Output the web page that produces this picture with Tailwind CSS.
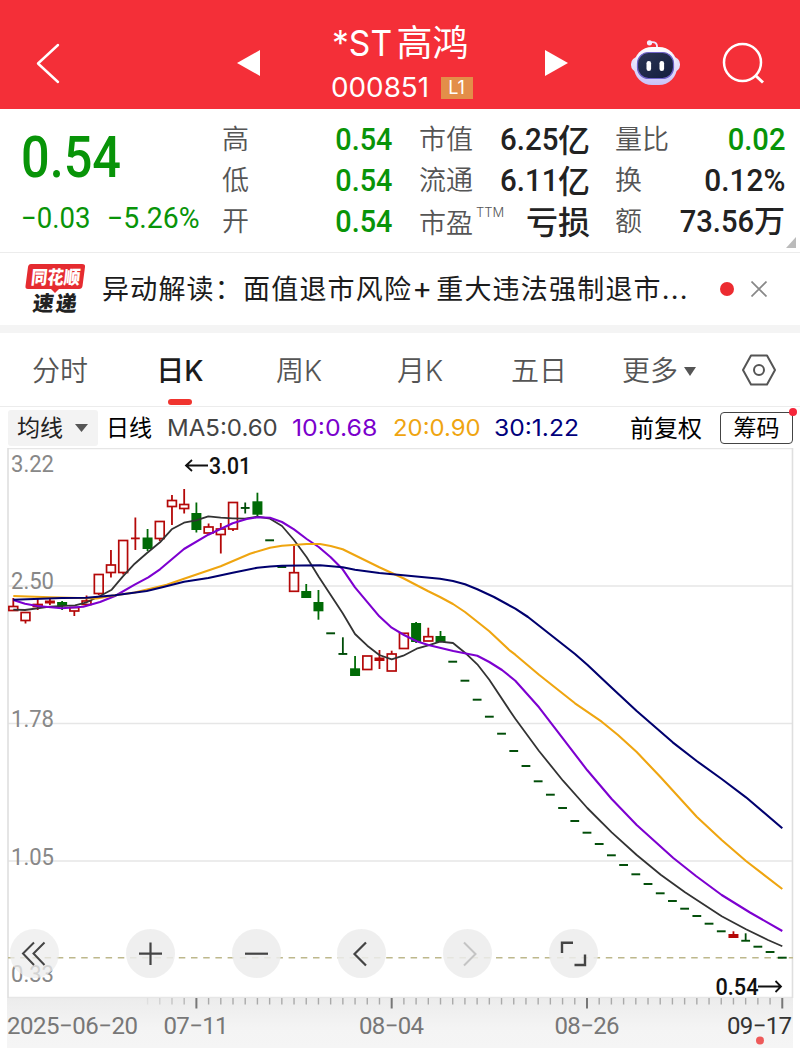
<!DOCTYPE html>
<html lang="zh-CN">
<head>
    <meta charset="UTF-8">
    <meta name="viewport" content="width=device-width, initial-scale=1.0">
    <title>*ST高鸿 000851</title>
    <script src="https://cdn.jsdelivr.net/npm/@tailwindcss/browser@4"></script>
    <style>
        body { font-family: Inter, 'Noto Sans CJK SC', sans-serif; }
        .din { font-family: Roboto, 'Noto Sans CJK SC', sans-serif; }
    </style>
</head>
<body class="w-[800px] h-[1048px] overflow-hidden bg-white text-[#222]">
    <header class="h-[109px] bg-[#f42f38] text-white flex">
        <div class="w-[230px] pt-[43px] pl-[36px]">
            <svg class="w-6 h-[42px]" viewBox="0 0 24 42" fill="none" stroke="#fff" stroke-width="2.4" stroke-linecap="round" stroke-linejoin="round"><path d="M22 2L2 20.500L22 39"/></svg>
        </div>
        <div class="w-[344px] flex justify-between">
            <svg class="w-6 h-[26px] mt-[50px] ml-[6px]" viewBox="0 0 24 26" fill="#fff"><path d="M24 0V26L1 13Z"/></svg>
            <div class="flex flex-col items-start pt-[21px] w-[142px]">
                <div class="flex h-[44px] items-center whitespace-nowrap">
                    <span class="w-[65px] text-[35px] leading-[44px]"><span class="inline-block origin-left scale-x-[0.96]">*ST</span></span>
                    <span class="text-[36px] leading-[44px]">高鸿</span>
                </div>
                <div class="flex h-[44px] items-center">
                    <span class="w-[109px] text-[27px]"><span class="inline-block origin-left scale-x-[1.03] -translate-x-px translate-y-px">000851</span></span>
                    <span class="w-8 h-[22px] bg-[#e38e49] text-[18px] leading-[22px] text-center translate-y-px">L1</span>
                </div>
            </div>
            <svg class="w-6 h-[26px] mt-[50px] mr-[5px]" viewBox="0 0 24 26" fill="#fff"><path d="M0 0V26L23 13Z"/></svg>
        </div>
        <svg class="w-[52px] h-12 ml-[55px] mt-[38px]" viewBox="0 0 52 48">
            <defs>
                <linearGradient id="head" x1="0" y1="0" x2="0" y2="1"><stop offset="0" stop-color="#fff"/><stop offset="1" stop-color="#c9c2f8"/></linearGradient>
                <linearGradient id="face" x1="0" y1="0" x2="1" y2="1"><stop offset="0" stop-color="#2c3655"/><stop offset="1" stop-color="#131d3d"/></linearGradient>
            </defs>
            <path d="M21 4.500C26 3.500 28.500 5 28 10" fill="none" stroke="#eee6ff" stroke-width="1.800"/>
            <circle cx="20.500" cy="4.800" r="2.600" fill="#f3edff"/>
            <rect x="2" y="19" width="49" height="15" rx="7" fill="#e4e0fc"/>
            <rect x="5" y="9" width="43" height="38" rx="18" fill="url(#head)"/>
            <rect x="8.500" y="14.500" width="36" height="26" rx="11" fill="url(#face)" stroke="#6f63c9" stroke-width="1.200"/>
            <rect x="17.500" y="23" width="4.600" height="10" rx="2.200" fill="#fff"/>
            <rect x="30.500" y="23" width="4.600" height="10" rx="2.200" fill="#fff"/>
        </svg>
        <svg class="w-11 h-11 ml-[41px] mt-[42px]" viewBox="0 0 44 44" fill="none" stroke="#fff" stroke-width="2.500"><circle cx="20.500" cy="20.500" r="18.500"/><path d="M33.500 33.500L41 40.500" stroke-width="3"/></svg>
    </header>

    <section class="h-[144px] border-b border-[#ececec] relative flex pt-[11px]">
        <div class="w-[222px] pl-[21px] text-[#089408] din whitespace-nowrap">
            <div class="text-[57px] leading-[76px] font-medium h-[76px]"><span class="inline-block origin-left scale-x-[0.885]">0.54</span></div>
            <div class="flex text-[29px] leading-[44px]">
                <span class="w-[86px]"><span class="inline-block origin-left scale-x-[0.95]">−0.03</span></span>
                <span class="inline-block origin-left scale-x-[0.98]">−5.26%</span>
            </div>
        </div>
        <div class="w-[170px] grid grid-rows-[41px_41px_41px] text-[#089408]">
            <div class="flex justify-between items-center"><span class="text-[27px] font-[350] text-[#555]">高</span><span class="din text-[31px] font-medium inline-block origin-right scale-x-[0.93]">0.54</span></div>
            <div class="flex justify-between items-center"><span class="text-[27px] font-[350] text-[#555]">低</span><span class="din text-[31px] font-medium inline-block origin-right scale-x-[0.93]">0.54</span></div>
            <div class="flex justify-between items-center"><span class="text-[27px] font-[350] text-[#555]">开</span><span class="din text-[31px] font-medium inline-block origin-right scale-x-[0.93]">0.54</span></div>
        </div>
        <div class="w-[171px] ml-[27px] grid grid-rows-[41px_41px_41px]">
            <div class="flex justify-between items-center"><span class="text-[27px] font-[350] text-[#555]">市值</span><span class="din text-[31px] font-medium flex items-center"><span class="origin-right scale-x-[0.95]">6.25</span><span class="text-[32px] leading-[36px]">亿</span></span></div>
            <div class="flex justify-between items-center"><span class="text-[27px] font-[350] text-[#555]">流通</span><span class="din text-[31px] font-medium flex items-center"><span class="origin-right scale-x-[0.95]">6.11</span><span class="text-[32px] leading-[36px]">亿</span></span></div>
            <div class="flex justify-between items-center"><span class="text-[27px] font-[350] text-[#555] relative top-[2px]">市盈<span class="absolute left-[57px] top-0 text-[13px] leading-4">TTM</span></span><span class="text-[32px] leading-[36px] font-medium">亏损</span></div>
        </div>
        <div class="w-[170px] ml-[25px] grid grid-rows-[41px_41px_41px]">
            <div class="flex justify-between items-center"><span class="text-[27px] font-[350] text-[#555]">量比</span><span class="din text-[31px] font-medium text-[#089408] inline-block origin-right scale-x-[0.94]">0.02</span></div>
            <div class="flex justify-between items-center"><span class="text-[27px] font-[350] text-[#555]">换</span><span class="din text-[31px] font-medium inline-block origin-right scale-x-[0.96]">0.12%</span></div>
            <div class="flex justify-between items-center"><span class="text-[27px] font-[350] text-[#555]">额</span><span class="din text-[31px] font-medium flex items-center"><span class="origin-right scale-x-[0.94]">73.56</span><span>万</span></span></div>
        </div>
        <svg class="absolute right-[4px] bottom-[4px] w-[10px] h-[11px]" viewBox="0 0 10 11" fill="#bbb"><path d="M10 0V11H0Z"/></svg>
    </section>

    <section class="h-[72px] flex items-center">
        <div class="ml-[25px] w-[77px] h-[52px]">
            <svg class="w-[62px] h-[52px]" viewBox="0 0 62 52">
                <path d="M6 1H57Q60.500 1 60 4L57.500 23Q57 26 54 26H34L30 30L26 26H3Q0 26 .5 23L3 4Q3.500 1 6 1Z" fill="#e52b30"/>
                <text transform="translate(5.500 20.500) skewX(-6)" font-size="18.500" font-weight="900" fill="#fff" textLength="49" lengthAdjust="spacingAndGlyphs" font-family="Noto Sans CJK SC">同花顺</text>
                <text transform="translate(7 47.500) skewX(-7)" font-size="21" font-weight="900" fill="#222" textLength="44" font-family="Noto Sans CJK SC">速递</text>
            </svg>
        </div>
        <div class="w-[618px] pt-[2px] text-[27px] tracking-[1.2px] whitespace-nowrap text-[#1c1c1c]">异动解读：面值退市风险<span class="inline-block w-[24px] text-[30px] leading-[30px]">+</span>重大违法强制退市...</div>
        <span class="size-[14px] rounded-full bg-[#ec2b30]"></span>
        <svg class="size-4 ml-[17px]" viewBox="0 0 16 16" stroke="#888" stroke-width="1.700" fill="none"><path d="M.5 .5L15.500 15.500M15.500 .5L.5 15.500"/></svg>
    </section>
    <div class="h-2 bg-[#f4f4f4]"></div>

    <nav class="h-[74px] pt-[3px] border-b border-[#ececec] grid grid-cols-[120px_120px_120px_120px_118px_122px_80px] text-[28px] font-[350] text-[#555] items-center text-center">
        <span>分时</span>
        <span class="relative font-medium text-[#1c1c1c]">日K<i class="absolute left-[48px] top-[49px] w-6 h-[6px] rounded-full bg-[#f0342e]"></i></span>
        <span class="-translate-x-px">周K</span>
        <span>月K</span>
        <span>五日</span>
        <span class="flex items-center justify-center">更多<svg class="w-3 h-[9px] ml-[6px]" viewBox="0 0 12 9" fill="#555"><path d="M0 0H12L6 9Z"/></svg></span>
        <svg class="w-[36px] h-8 ml-[21px] mb-[3px]" viewBox="0 0 36 32" fill="none" stroke="#555" stroke-width="2"><path d="M10 1.500H26L34 16L26 30.500H10L2 16Z" stroke-linejoin="round"/><circle cx="18" cy="16" r="5"/></svg>
    </nav>

    <div class="h-[41px] flex items-center pl-2 text-[23px] whitespace-nowrap">
        <div class="w-[90px] h-[36px] rounded-[3px] bg-[#f3f3f3] flex items-center justify-between pl-[9px] pr-[10px] pt-px text-[#222]">均线<svg class="w-[13px] h-2" viewBox="0 0 13 8" fill="#555"><path d="M0 0H13L6.500 8Z"/></svg></div>
        <span class="w-[69px] pl-[8px] pt-[2px] text-black">日线</span>
        <span class="w-[125px] pt-[2px] text-[#444]"><span class="inline-block origin-left scale-x-[1.045]">MA5:0.60</span></span>
        <span class="w-[101px] pt-[2px] text-[#7a00cc]"><span class="inline-block origin-left scale-x-[1.08]">10:0.68</span></span>
        <span class="w-[101px] pt-[2px] text-[#efa510]"><span class="inline-block origin-left scale-x-[1.04]">20:0.90</span></span>
        <span class="w-[136px] pt-[2px] text-[#00007c]"><span class="inline-block origin-left scale-x-[1.07]">30:1.22</span></span>
        <span class="w-[90px] pt-[2px] text-[24px] text-black">前复权</span>
        <span class="relative w-[73px] h-8 border border-[#444] rounded-[4px] text-[23px] leading-[31px] text-center text-black">筹码<i class="absolute -right-[5px] -top-[5px] size-2 rounded-full bg-[#f5263a]"></i></span>
    </div>

    <main class="relative h-[600px]">
        <svg class="block w-[800px] h-[600px]" viewBox="0 448 800 600" fill="none">
            <defs>
                <linearGradient id="axis" x1="0" y1="0" x2="0" y2="1"><stop offset="0" stop-color="#ececec"/><stop offset=".6" stop-color="#f4f4f4"/><stop offset="1" stop-color="#f5f5f5"/></linearGradient>
            </defs>
            <rect x="7" y="998" width="786" height="50" fill="url(#axis)"/>
            <path d="M8 448.500H792M8 586H792M8 723.500H792M8 861H792M8 997.500H792" stroke="#e6e6e6" stroke-width="1.300"/>
            <path d="M8 448V998M792.500 448V998" stroke="#dfdfdf" stroke-width="1.600"/>
            <path d="M8 957.700H793" stroke="#bdb88c" stroke-width="1.500" stroke-dasharray="6.500 5.700"/>
            <g id="candles"></g>
            <g stroke-width="2.100" stroke-linejoin="round">
                <polyline stroke="#333" stroke-width="1.800" points="13.3,609.7 25,610 50,606.7 75,605.3 86.7,602.3 100,596 111.7,589.7 122.7,576.7 134.7,563.7 146.7,553.3 160,542.3 171.7,529.3 184,522.7 196,520.3 208.3,516.3 220.7,517.7 232.7,518.3 245,518.7 257.3,516.7 270,518.7 282,526 294,540 306.7,557.3 318.7,576.7 330.7,595 342.7,613.3 355,634 367.3,645.7 379.3,655 391.7,659.3 403.3,655.7 416.7,648.7 428.3,645.3 440,641.7 453,643 465,652.7 477.3,664.3 489.3,679.7 510,711 515.3,718.7 539,751 563,780.7 587.3,808 611.7,832.3 636.7,855 660.7,874.7 685,892.3 721.7,916.3 746,929.3 768,940 782.3,946.3"/>
                <polyline stroke="#7d00d0" points="13.3,600 25,603.7 37.3,606 61.7,608.3 83.3,606.7 100,602 115,596 134.7,584.7 148.3,577.3 160,569.3 184,549 208.3,534.7 232.7,523.3 246.7,519 257.3,517.3 270,517.7 282,522 294,529.3 306.7,539 318.7,547 330.7,557.3 342.7,569.3 355,587.3 379.3,616.3 391.7,627.7 404,635 416.7,641.3 428.3,645 453.3,651 477.3,655.7 489.3,662 502,670 515.3,680.7 539,707.3 563,738.7 587.3,770.3 611.7,799 636.7,825 673.3,858 696,876 721.7,895 750,912.500 782.3,931"/>
                <polyline stroke="#efa510" points="13.3,596 50,597.3 96.7,598.5 115,595.3 134.7,592.500 166.7,584.7 184,578.7 220.7,566.3 250,553.7 270,547.7 282,545.7 306.7,544 320,544 330.7,546 342.7,549.3 379.3,567.3 403.3,578.3 428.3,591.3 440,597 453,604 465,612 489.3,631.3 510,650.7 515.3,654.7 539,674.7 575,703.3 601.7,721.7 618,735 636.7,752 660.7,777.3 696.7,816.7 721.7,840 746,861 782.3,889"/>
                <polyline stroke="#00006e" points="13.3,599.7 61.7,598 86.7,597.7 115,595.3 146.7,591 163.3,587 184,581.7 208.3,578 232.7,572.7 257.3,567.7 270,566.5 282,565.7 320,565.3 342.7,567.3 355,569.7 379.3,573 403.3,575.3 440,578.7 453,581 465,584.3 477.3,589.3 494,597 515.3,608.7 528,617 575,654 587.3,664.7 611.7,687.7 636.7,711 672.7,742.3 696.7,761 721.7,779 746,797.3 782.3,828.3"/>
            </g>
            <g font-family="Roboto" font-size="24" fill="#888">
                <text x="11" y="472" textLength="43" lengthAdjust="spacingAndGlyphs">3.22</text>
                <text x="11" y="589" textLength="43" lengthAdjust="spacingAndGlyphs">2.50</text>
                <text x="11" y="727" textLength="43" lengthAdjust="spacingAndGlyphs">1.78</text>
                <text x="11" y="864.500" textLength="43" lengthAdjust="spacingAndGlyphs">1.05</text>
                <text x="11" y="981.500" textLength="43" lengthAdjust="spacingAndGlyphs">0.33</text>
            </g>
            <g font-family="Roboto" font-size="24" font-weight="500" fill="#111">
                <text x="209" y="474" textLength="42" lengthAdjust="spacingAndGlyphs">3.01</text>
                <text x="715.500" y="995" textLength="43" lengthAdjust="spacingAndGlyphs">0.54</text>
            </g>
            <path d="M208 465.500H186M192 460L186 465.500L192 471M758 986.500H781M775.500 981L781 986.500L775.500 992" stroke="#111" stroke-width="1.800"/>
            <g id="ticks"></g>
            <g font-family="Roboto" font-size="24" fill="#777">
                <text x="7" y="1034" textLength="131" lengthAdjust="spacing">2025−06−20</text>
                <text x="163.500" y="1034" textLength="65" lengthAdjust="spacing">07−11</text>
                <text x="359" y="1034" textLength="65" lengthAdjust="spacing">08−04</text>
                <text x="554.500" y="1034" textLength="65" lengthAdjust="spacing">08−26</text>
                <text x="727" y="1034" textLength="65" lengthAdjust="spacing" fill="#333">09−17</text>
            </g>
            <circle cx="760" cy="1040.500" r="4" fill="#ee5a5a"/>
        </svg>

        <!-- chart controls -->
        <div class="absolute left-[10px] top-[481px] flex text-[#444]">
            <button class="size-[49px] mr-[67px] rounded-full bg-[#ececec]/75"><svg class="size-full" viewBox="0 0 49 49" fill="none" stroke="currentColor" stroke-width="2"><path d="M24 13.500L13 24.500L24 36M34.500 13.500L23.500 24.500L34.500 36"/></svg></button>
            <button class="size-[49px] mr-[57px] rounded-full bg-[#ececec]/85"><svg class="size-full" viewBox="0 0 49 49" fill="none" stroke="currentColor" stroke-width="2.200"><path d="M13 24.700H36M24.500 13.500V36"/></svg></button>
            <button class="size-[49px] mr-[56px] rounded-full bg-[#ececec]/85"><svg class="size-full" viewBox="0 0 49 49" fill="none" stroke="currentColor" stroke-width="2.200"><path d="M13 24.700H36"/></svg></button>
            <button class="size-[49px] mr-[57px] rounded-full bg-[#ececec]/85"><svg class="size-full" viewBox="0 0 49 49" fill="none" stroke="currentColor" stroke-width="2.200"><path d="M29 13.500L17.500 25L29 36.500"/></svg></button>
            <button class="size-[49px] mr-[57px] rounded-full bg-[#ececec]/85 text-[#c4c4c4]"><svg class="size-full" viewBox="0 0 49 49" fill="none" stroke="currentColor" stroke-width="2"><path d="M21 13.500L32.500 25L21 36.500"/></svg></button>
            <button class="size-[49px] rounded-full bg-[#ececec]/85"><svg class="size-full" viewBox="0 0 49 49" fill="none" stroke="currentColor" stroke-width="2.400"><path d="M13 24V13.700H24M25.500 36H36V25.500"/></svg></button>
        </div>
    </main>

    <script>
        // type, body top, body bottom, wick top, wick bottom
        // h = hollow red, r = solid red, g = solid green
        const candles = [
            ['h', 606.5, 610.5, 598, 611], ['h', 612.5, 620.5, 612, 623.5], ['h', 604.5, 606.5, 599, 610], ['r', 600.5, 603.5, 599, 605],
            ['g', 602, 606, 601, 610], ['h', 607.5, 611, 607, 616], ['h', 601, 604.5, 595.5, 606], ['h', 574.5, 593.5, 574, 595],
            ['h', 565, 572.5, 550, 577.5], ['h', 540.5, 572.5, 540, 574.5], ['r', 537.5, 539.3, 517.5, 550], ['g', 537.5, 549, 529, 551],
            ['h', 521.5, 538.5, 521, 541], ['h', 500.5, 506.5, 495, 525], ['h', 504.5, 508.5, 489, 513.5], ['g', 513, 530, 502.5, 532.5],
            ['h', 527, 533, 523.5, 533], ['h', 529, 534.5, 523, 553.5], ['h', 502.5, 529, 502, 531], ['g', 507, 508.9, 502.5, 513.5],
            ['g', 501.3, 514.7, 492.7, 516], 540.3, 567, ['h', 572.7, 591.3, 546, 592],
            ['g', 591, 598, 584, 598], ['g', 602, 611.3, 590, 619.7], 633.3, ['g', 653, 654.9, 637.3, 654.5],
            ['g', 668.3, 676, 656, 676], ['h', 656, 669.5, 656, 669.5], ['r', 657.5, 661, 650, 669], ['h', 654, 671, 650.7, 671],
            ['h', 633.3, 648.5, 633, 648.5], ['g', 623, 642, 622, 643], ['h', 636.7, 641, 627.7, 641], ['g', 636, 642, 631, 642],
            661.7, 680.7, 699.7, 716.7, 733.7, 751, 766, 781.3, 794.7, 808, 821, 832.7, 844, 855.3, 865, 874.3, 884, 893.3, 901, 908.7, 916, 923.7, 931.3,
            ['r', 934, 938, 931.3, 938], ['g', 939.8, 941.7, 933.3, 941], 946.7, 952, 957.7
        ];
        const RED = '#b40808', GREEN = '#006a06', DARK = '#004d08';
        let out = '';
        candles.forEach((c, i) => {
            const x = 13.3 + i * 12.206;
            // one-price days are only a dash
            if (typeof c === 'number') c = ['g', c - 0.98, c + 0.98];
            const [t, a, b, hi, lo] = c;
            const col = t === 'g' ? (b - a < 2 ? DARK : GREEN) : RED;
            if (hi) {
                if (t === 'h') {
                    out += `<path d="M${x} ${hi}V${a}M${x} ${b}V${lo}" stroke="${col}" stroke-width="1.8"/>`;
                } else {
                    out += `<path d="M${x} ${hi}V${lo}" stroke="${col}" stroke-width="1.8"/>`;
                }
            }
            if (t === 'h') {
                out += `<rect x="${x - 4.4}" y="${a}" width="8.8" height="${b - a}" stroke="${col}" stroke-width="1.7"/>`;
            } else {
                const w = b - a < 2 ? 8.8 : 10;
                out += `<rect x="${x - w / 2}" y="${a}" width="${w}" height="${b - a}" fill="${col}"/>`;
            }
        });
        document.getElementById('candles').innerHTML = out;

        let ticks = '';
        for (let i = 11; i < 64; i++) {
            const x = 13.3 + i * 12.206;
            const major = i % 16 === 15;
            const o = i < 15 ? (i - 10) / 5 : 1;
            ticks += `<path d="M${x} 998V${major ? 1008.5 : 1004.5}" stroke="${major ? '#777' : '#aaa'}" stroke-width="${major ? 2 : 1.4}" opacity="${major ? 1 : o}"/>`;
        }
        document.getElementById('ticks').innerHTML = ticks;
    </script>
</body>
</html>
